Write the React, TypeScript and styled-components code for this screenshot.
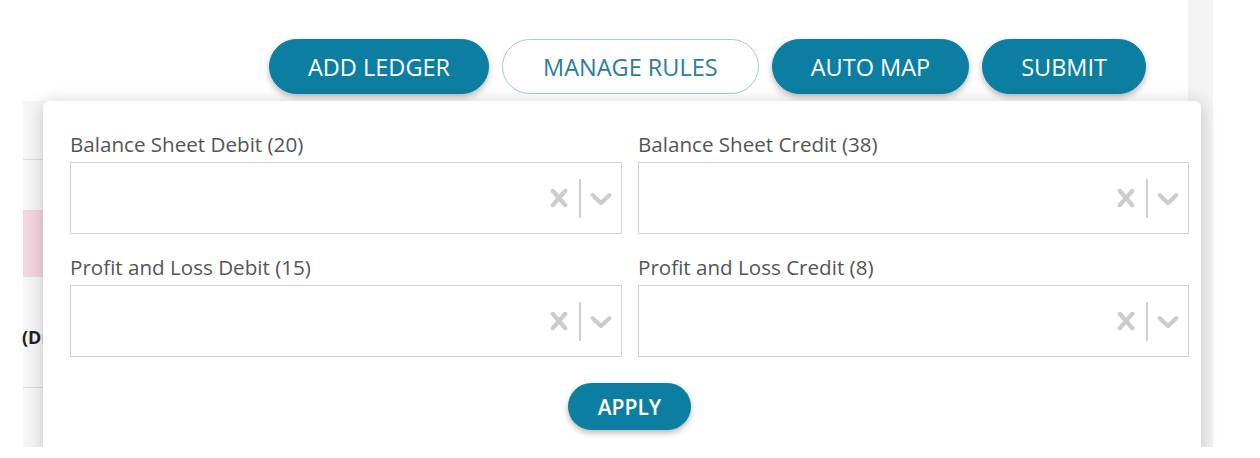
import React from 'react';
import styled, { createGlobalStyle } from 'styled-components';

const GlobalStyle = createGlobalStyle`
  body {
    margin: 0;
    background: #ffffff;
    font-family: 'Open Sans', 'Liberation Sans', sans-serif;
  }
`

const filters = [
  { label: 'Balance Sheet Debit (20)' },
  { label: 'Balance Sheet Credit (38)' },
  { label: 'Profit and Loss Debit (15)' },
  { label: 'Profit and Loss Credit (8)' },
]

const ClearIcon = () => (
  <svg width="36" height="36" viewBox="0 0 20 20" fill="currentColor">
    <path d="M14.348 14.849c-0.469 0.469-1.229 0.469-1.697 0l-2.651-3.030-2.651 3.029c-0.469 0.469-1.229 0.469-1.697 0-0.469-0.469-0.469-1.229 0-1.697l2.758-3.15-2.759-3.152c-0.469-0.469-0.469-1.228 0-1.697s1.228-0.469 1.697 0l2.652 3.031 2.651-3.031c0.469-0.469 1.228-0.469 1.697 0s0.469 1.229 0 1.697l-2.758 3.152 2.758 3.15c0.469 0.469 0.469 1.229 0 1.698z" />
  </svg>
)

const ChevronIcon = () => (
  <svg width="36" height="36" viewBox="0 0 20 20" fill="currentColor">
    <path d="M4.516 7.548c0.436-0.446 1.043-0.481 1.576 0l3.908 3.747 3.908-3.747c0.533-0.481 1.141-0.446 1.574 0 0.436 0.445 0.408 1.197 0 1.615-0.406 0.418-4.695 4.502-4.695 4.502-0.217 0.223-0.502 0.335-0.787 0.335s-0.57-0.112-0.789-0.335c0 0-4.287-4.084-4.695-4.502s-0.436-1.170 0-1.615z" />
  </svg>
)

const App: React.FC = () => {
  return (
    <>
      <GlobalStyle />
      <Page>
        <Main>
          <Toolbar>
            <PillButton>ADD LEDGER</PillButton>
            <PillButton outlined>MANAGE RULES</PillButton>
            <PillButton>AUTO MAP</PillButton>
            <PillButton>SUBMIT</PillButton>
          </Toolbar>

          <Table>
            <TableRow height={59} bordered />
            <TableRow height={50} />
            <TableRow height={67} tint="#f3d4df" />
            <TableRow height={111} bordered>
              <Cell>(Dr)</Cell>
            </TableRow>
            <TableRow height={60} />
          </Table>

          <FilterPanel>
            <FilterGrid>
              {filters.map(f => (
                <Field key={f.label}>
                  <FieldLabel>{f.label}</FieldLabel>
                  <SelectBox>
                    <SelectValue />
                    <Indicator>
                      <ClearIcon />
                    </Indicator>
                    <Separator />
                    <Indicator>
                      <ChevronIcon />
                    </Indicator>
                  </SelectBox>
                </Field>
              ))}
            </FilterGrid>
            <ApplyRow>
              <ApplyButton>APPLY</ApplyButton>
            </ApplyRow>
          </FilterPanel>
        </Main>
        <ScrollTrack />
      </Page>
    </>
  )
}

const Page = styled.div`
  display: flex;
  width: 1260px;
  height: 447px;
  overflow: hidden;
  background: #ffffff;
`

const Main = styled.div`
  position: relative;
  flex: 0 0 1188px;
  display: flex;
  flex-direction: column;
`

const Toolbar = styled.div`
  display: flex;
  justify-content: flex-end;
  gap: 13px;
  padding: 39px 42px 0 0;
`

const PillButton = styled.button<{ outlined?: boolean }>`
  height: 55px;
  padding: 0 ${props => (props.outlined ? 40 : 38)}px;
  border-radius: 28px;
  font-family: 'Open Sans', 'Liberation Sans', sans-serif;
  font-size: 23.5px;
  font-weight: 500;
  cursor: pointer;
  border: 1px solid ${props => (props.outlined ? '#9ccbdb' : '#0b7ea2')};
  background: ${props => (props.outlined ? '#ffffff' : '#0b7ea2')};
  color: ${props => (props.outlined ? '#2b7c9e' : '#ffffff')};
  box-shadow: ${props => (props.outlined ? 'none' : '0 3px 6px rgba(0, 0, 0, 0.28)')};
`

const Table = styled.div`
  margin: 7px 0 0 23px;
  display: flex;
  flex-direction: column;
  background: #f6f6f8;
`

const TableRow = styled.div<{ height: number; tint?: string; bordered?: boolean }>`
  height: ${props => props.height}px;
  box-sizing: border-box;
  display: flex;
  align-items: center;
  background: ${props => props.tint || '#f6f6f8'};
  border-bottom: ${props => (props.bordered ? '1px solid #dcdcde' : 'none')};
`

const Cell = styled.div`
  margin: 10px 0 0 -1px;
  font-size: 18px;
  font-weight: 700;
  color: #222222;
`

const FilterPanel = styled.div`
  position: absolute;
  z-index: 2;
  left: 43px;
  top: 101px;
  width: 1158px;
  height: 380px;
  box-sizing: border-box;
  padding: 30px 12px 0 27px;
  background: #ffffff;
  border-radius: 6px;
  box-shadow: 0 2px 18px rgba(0, 0, 0, 0.2);
`

const FilterGrid = styled.div`
  display: grid;
  grid-template-columns: 552px 551px;
  column-gap: 16px;
  row-gap: 20px;
`

const Field = styled.div`
  display: flex;
  flex-direction: column;
  gap: 5px;
`

const FieldLabel = styled.div`
  font-size: 20.6px;
  line-height: 26px;
  color: #555555;
`

const SelectBox = styled.div`
  height: 72px;
  box-sizing: border-box;
  display: flex;
  align-items: center;
  border: 1.5px solid #d2d2d2;
  background: #ffffff;
`

const SelectValue = styled.div`
  flex: 1;
`

const Indicator = styled.div`
  display: flex;
  padding: 0 2px;
  color: #cccccc;
`

const Separator = styled.span`
  width: 2px;
  height: 39px;
  background: #d0d0d0;
`

const ApplyRow = styled.div`
  display: flex;
  justify-content: center;
  padding: 26px 0 0 0;
`

const ApplyButton = styled.button`
  height: 47px;
  padding: 0 30px;
  border: none;
  border-radius: 24px;
  background: #0b7ea2;
  color: #ffffff;
  font-family: 'Open Sans', 'Liberation Sans', sans-serif;
  font-size: 21px;
  font-weight: 600;
  cursor: pointer;
  box-shadow: 0 3px 6px rgba(0, 0, 0, 0.28);
`

const ScrollTrack = styled.div`
  flex: 0 0 25px;
  background: #f3f3f5;
`

export default App
